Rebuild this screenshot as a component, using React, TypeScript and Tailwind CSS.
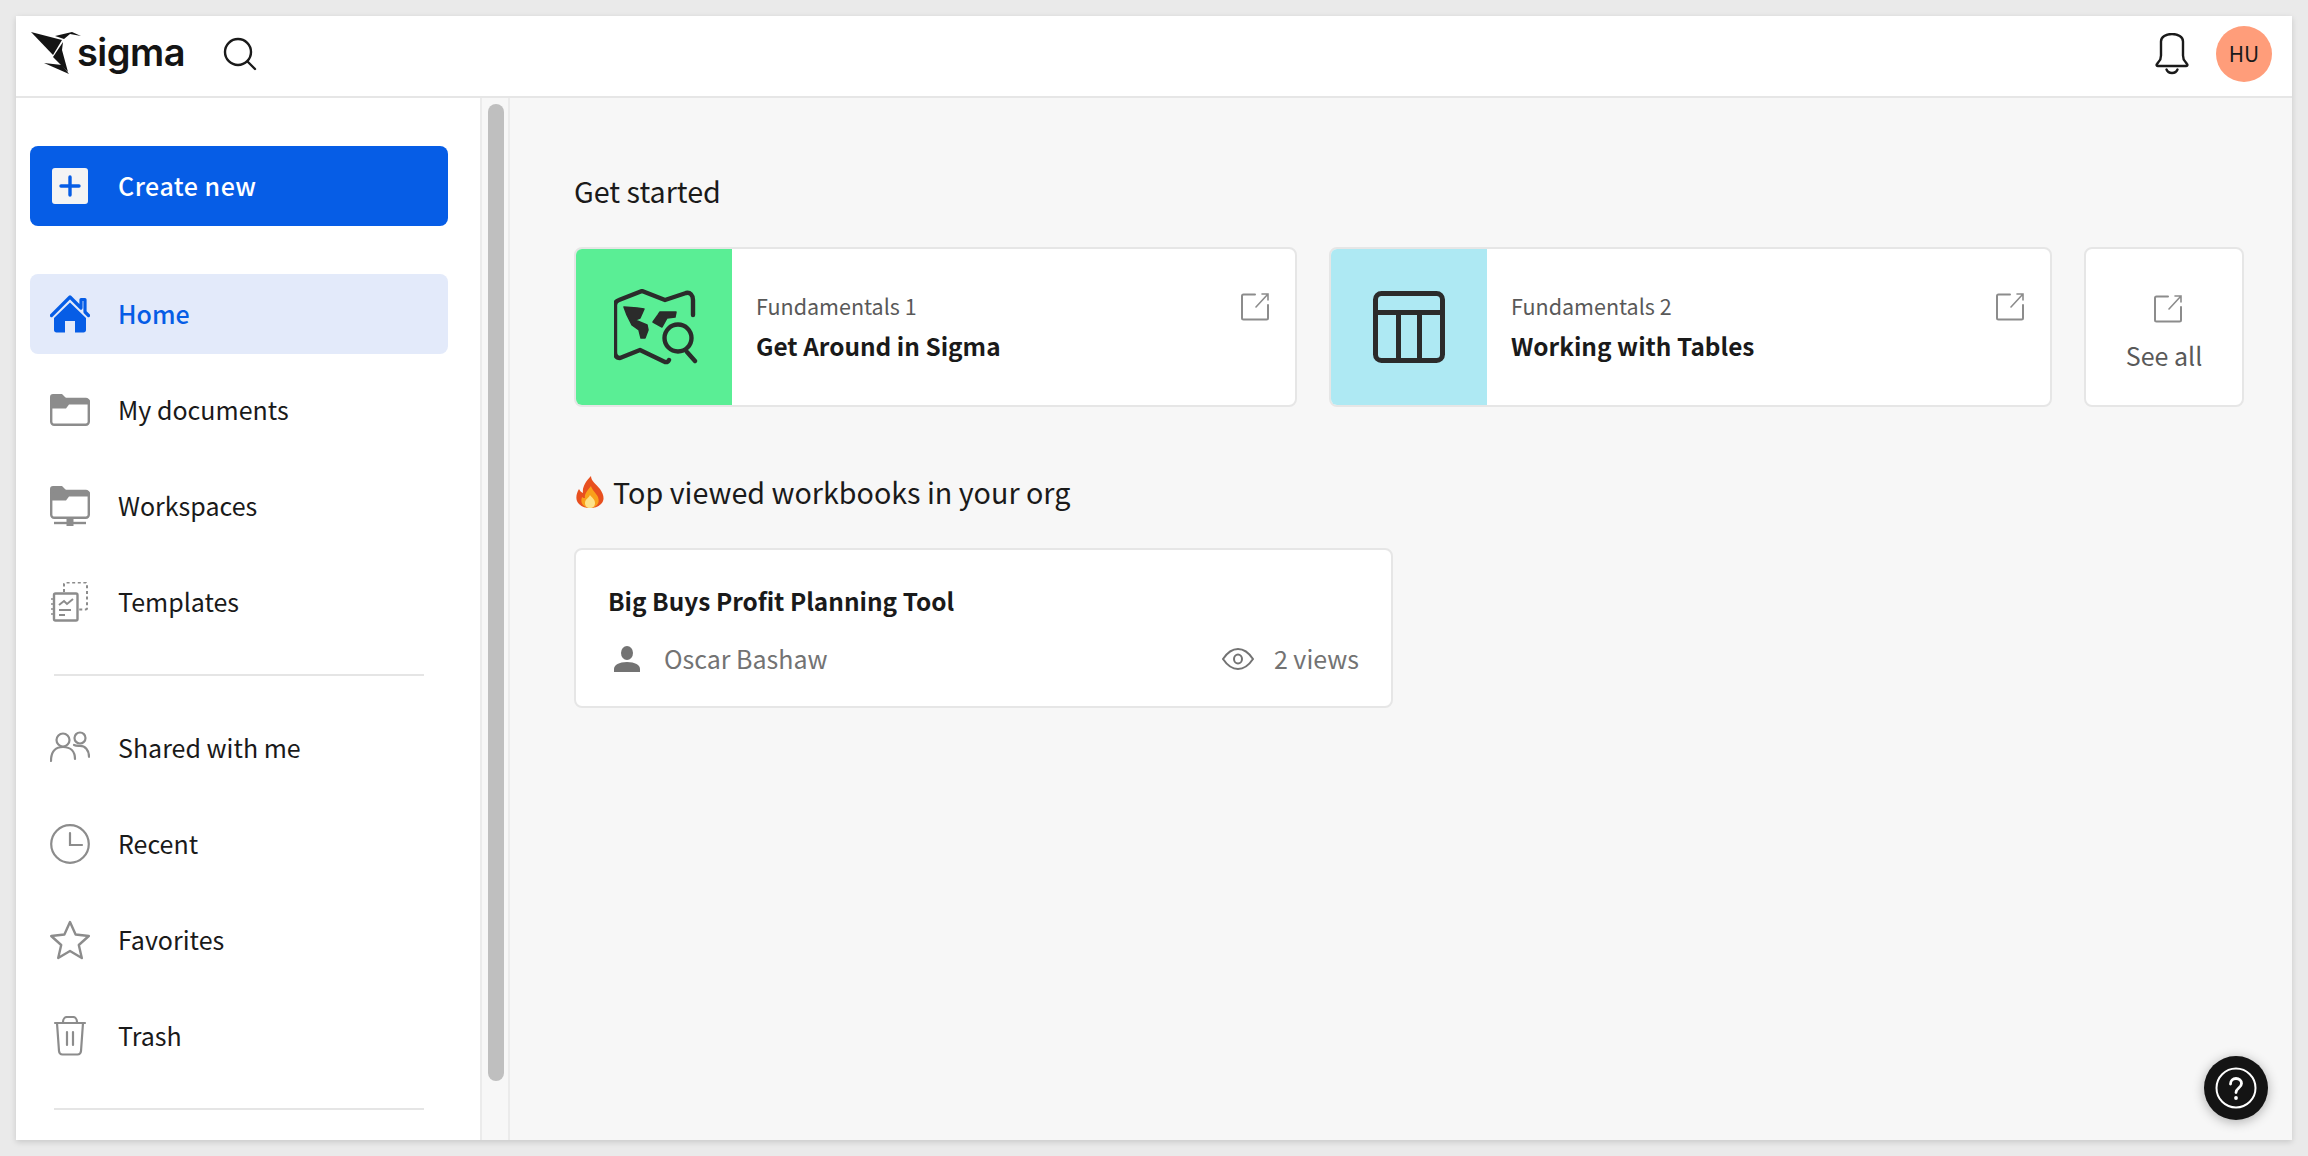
import React from "react";

const FONT = "font-['Noto_Sans_CJK_SC','Noto_Sans',sans-serif]";

const Logo = () => (
  <svg width="52" height="46" viewBox="0 0 52 46" fill="#141414" className="shrink-0">
    <polygon points="1,1 32,9 23,24" />
    <polygon points="25,5 42,1 51,5 40,3 34,8" />
    <polygon points="33,11 23,26 38,41 32,19" />
    <polygon points="14,32 32,34 39,43" />
  </svg>
);

const Search = () => (
  <svg width="34" height="34" viewBox="0 0 34 34" fill="none" stroke="#1a1a1a" strokeWidth="2.4" strokeLinecap="round">
    <circle cx="15" cy="15" r="13" />
    <path d="M24.5 24.5 32 32" />
  </svg>
);

const Bell = () => (
  <svg width="34" height="42" viewBox="0 0 34 42" fill="none" stroke="#1a1a1a" strokeWidth="2.4" strokeLinejoin="round" strokeLinecap="round">
    <path d="M6 8.500v14c0 3-1 5-2.500 6.500L2 31c-.8 1-.3 2 1 2h28c1.300 0 1.800-1 1-2l-1.500-2C29 27.500 28 25.500 28 22.500v-14C28 4 23 1 17 1S6 4 6 8.500Z" />
    <path d="M11.500 36.500c1 2.500 3 3.500 5.500 3.500s4.500-1 5.500-3.500" />
  </svg>
);

const Plus = () => (
  <div className="w-9 h-9 rounded-[3px] bg-[#f4f4f4] flex items-center justify-center shrink-0">
    <svg width="22" height="22" viewBox="0 0 22 22" stroke="#065de6" strokeWidth="3.400" strokeLinecap="round">
      <path d="M11 2v18M2 11h18" />
    </svg>
  </div>
);

const HomeIcon = () => (
  <svg width="40" height="40" viewBox="0 0 40 40" fill="#065de6">
    <path d="M20 8.500 4 24v12c0 1.500 1 2.500 2.500 2.500H15V27h10v11.500h8.500c1.500 0 2.500-1 2.500-2.500V24Z" />
    <path d="M1.500 21.500 20 3l11 11V5.500h4V18l3.500 3.500" fill="none" stroke="#065de6" strokeWidth="3.200" strokeLinecap="round" strokeLinejoin="round" />
  </svg>
);

const G = "#8c8c8c";

const Folder = () => (
  <svg width="40" height="40" viewBox="0 0 40 40" fill="none">
    <path d="M0 7c0-2 1-3 3-3h9l5 5h20c2 0 3 1 3 3v2.500H19l-3 4H0Z" fill={G} />
    <rect x="1.200" y="9" width="37.600" height="25.800" rx="3" stroke={G} strokeWidth="2.400" />
  </svg>
);

const WorkspaceIcon = () => (
  <svg width="40" height="40" viewBox="0 0 40 40" fill="none">
    <path d="M0 3c0-2 1-3 3-3h9l5 5h20c2 0 3 1 3 3v2.500H19l-3 4H0Z" fill={G} />
    <rect x="1.200" y="5" width="37.600" height="26.800" rx="3" stroke={G} strokeWidth="2.400" />
    <path d="M4 37h32" stroke={G} strokeWidth="2.400" />
    <rect x="16.500" y="33" width="7" height="7" fill={G} />
  </svg>
);

const TemplateIcon = () => (
  <svg width="40" height="40" viewBox="0 0 40 40" fill="none" stroke={G} strokeWidth="2">
    <path d="M14 10V2c0-.8.500-1.500 1.500-1.500h20c1 0 1.500.7 1.500 1.500v24c0 1-.5 1.500-1.500 1.500H28" strokeDasharray="3 2.600" />
    <rect x="4" y="11.500" width="23.500" height="27" rx="1.500" strokeWidth="2.400" />
    <path d="M1 17h3M1 22h3M1 27h3M1 32h3" strokeWidth="1.600" />
    <path d="M9 23l5-4 3 3 6-5" strokeWidth="2" />
    <path d="M9 28h12M9 33h6" strokeWidth="2" />
  </svg>
);

const People = () => (
  <svg width="40" height="40" viewBox="0 0 40 40" fill="none" stroke={G} strokeWidth="2.200" strokeLinecap="round">
    <circle cx="13" cy="12" r="6.500" />
    <path d="M1 33c0-9 4-14 12-14s12 5 12 12" />
    <circle cx="30" cy="10" r="5.500" />
    <path d="M24 17c2 1 4 .8 6 .8 5 0 9 4 9 11" />
  </svg>
);

const Clock = () => (
  <svg width="40" height="40" viewBox="0 0 40 40" fill="none" stroke={G} strokeWidth="2.200" strokeLinecap="round">
    <circle cx="20" cy="20" r="18.800" />
    <path d="M20 9v12h12" />
  </svg>
);

const Star = () => (
  <svg width="40" height="40" viewBox="0 0 40 40" fill="none" stroke={G} strokeWidth="2.400" strokeLinejoin="round">
    <path d="m20 2 5.600 12.500L38.800 16l-10 9 3 13L20 31l-11.800 7 3-13-10-9 13.200-1.500Z" />
  </svg>
);

const Trash = () => (
  <svg width="40" height="40" viewBox="0 0 40 40" fill="none" stroke={G} strokeWidth="2.200" strokeLinecap="round">
    <path d="M5 7h30" />
    <path d="M7 7l2 28c.2 2 1.500 3.500 3.500 3.500h15c2 0 3.300-1.500 3.500-3.500l2-28" />
    <path d="M13 6c0-3 2-5 4-5h6c2 0 4 2 4 5" />
    <path d="M17 16v13M23 16v13" />
  </svg>
);

const External = ({ c = "#8c8c8c" }: { c?: string }) => (
  <svg width="28" height="28" viewBox="0 0 28 28" fill="none" stroke={c} strokeWidth="2" strokeLinecap="round">
    <path d="M14 1.500H2.500c-.8 0-1.500.7-1.500 1.500v22c0 .8.700 1.500 1.500 1.500h23c.8 0 1.500-.7 1.500-1.500V12" />
    <path d="M15 14 27 1M21 1h6v6" strokeWidth="1.600" />
  </svg>
);

const MapIcon = () => (
  <svg width="84" height="76" viewBox="0 0 84 76" fill="none" stroke="#2b2b2b" strokeWidth="4.400" strokeLinecap="round" strokeLinejoin="round" className="ml-1">
    <path d="M79 26V11c0-5-3-8-7-7L51 11 28 2 5 11c-3 1-4 3-4 5v47c0 4 2 6 5 6l20-8 25 12c2 .5 3 0 4-2" />
    <path d="M10 18l13 1 7 1-4 9-5 2 12 5 1 5-3 8h-4l-2-8-7-5-5-10Z" fill="#2b2b2b" strokeWidth="1.500" />
    <path d="M46 23h16l-1 5-8 1-5 9-9-5 5-7Z" fill="#2b2b2b" strokeWidth="1.500" />
    <circle cx="64" cy="49" r="13.500" />
    <path d="M73 63l8 9" />
  </svg>
);

const TableIcon = () => (
  <svg width="72" height="72" viewBox="0 0 72 72" fill="none" stroke="#2b2b2b" strokeWidth="5">
    <rect x="2.500" y="2.500" width="67" height="67" rx="6" />
    <path d="M2.500 21.500h67M25.500 21.500v48M46.500 21.500v48" />
  </svg>
);

const Fire = () => (
  <svg width="28" height="32" viewBox="0 0 28 32" className="shrink-0 ml-0.5">
    <path d="M15 0c0 5 5 8 9 13 4 6 5 11 1 15-3 3-7 4-11 4S6 31 3 28c-4-4-3-10 0-15 1 2 2 3 4 4C6 11 10 5 15 0Z" fill="#e8501f" />
    <path d="M15 10c1 4 5 7 7 11 1 3 1 6-1 8-2 2-4 3-7 3s-5-1-7-3c-2-2-2-5-1-8 1 1 2 1 3 1-1-4 3-8 6-12Z" fill="#f9a01b" />
    <path d="M14 19c1 2 5 4 5 8 0 3-2 5-5 5s-5-2-5-5c0-4 4-5 5-8Z" fill="#fde28a" />
  </svg>
);

const Person = () => (
  <svg width="26" height="26" viewBox="0 0 26 26" fill="#737373">
    <ellipse cx="13" cy="7" rx="6" ry="7" />
    <path d="M0 26v-3c0-4 5-7 13-7s13 3 13 7v3Z" />
  </svg>
);

const Eye = () => (
  <svg width="32" height="22" viewBox="0 0 32 22" fill="none" stroke="#737373" strokeWidth="2">
    <path d="M1 11C5 5 10 1 16 1s11 4 15 10c-4 6-9 10-15 10S5 17 1 11Z" strokeLinejoin="round" />
    <ellipse cx="16" cy="11" rx="4" ry="4.500" />
  </svg>
);

const Help = () => (
  <svg width="42" height="42" viewBox="0 0 42 42" fill="none" stroke="#fff" strokeWidth="2">
    <circle cx="21" cy="21" r="19.500" />
    <path d="M15.500 17c0-3.500 2.500-5.500 5.500-5.500s5.500 2 5.500 5c0 4.500-5.500 4.500-5.500 9" strokeWidth="2.800" strokeLinecap="round" />
    <circle cx="21" cy="31" r="1.900" fill="#fff" stroke="none" />
  </svg>
);

const Row = ({ icon, label }: { icon: React.ReactNode; label: string }) => (
  <div className="h-20 flex items-center pl-5 gap-[28px] text-[#1a1a1a]">
    <div className="w-10 h-10 flex items-center justify-center shrink-0">{icon}</div>
    <span className="text-[25px] leading-10 -mt-[2px]">{label}</span>
  </div>
);

const Divider = () => <div className="h-0.5 my-8 ml-6 w-[370px] bg-[#e5e5e5] shrink-0" />;

const Tutorial = ({ color, icon, eyebrow, title }: { color: string; icon: React.ReactNode; eyebrow: string; title: string }) => (
  <div className="flex-1 h-40 flex bg-white border-2 border-[#e6e6e6] rounded-lg overflow-hidden">
    <div className={`w-[156px] shrink-0 flex items-center justify-center ${color}`}>{icon}</div>
    <div className="flex-1 pl-6 pt-[41px]">
      <div className="text-[21.5px] leading-8 text-[#595959]">{eyebrow}</div>
      <div className="text-[24.4px] leading-9 mt-[6px] font-semibold text-[#1a1a1a]">{title}</div>
    </div>
    <div className="pt-[44px] pr-[26px] h-fit">
      <External />
    </div>
  </div>
);

export default function App() {
  return (
    <div className={`${FONT} h-screen w-full bg-[#eaeaea] p-4 overflow-hidden`}>
      <div className="relative h-full flex flex-col bg-white shadow-[0_2px_6px_rgba(0,0,0,0.15)] overflow-hidden">
        <header className="h-[82px] shrink-0 border-b-2 border-[#e6e6e6] flex items-center pl-[14px] pr-5 pb-1 bg-white">
          <Logo />
          <span className="font-['Inter',sans-serif] text-[38px] font-semibold tracking-[-0.5px] text-[#141414] -ml-[5px] leading-none -mt-1">sigma</span>
          <div className="ml-[38px]">
            <Search />
          </div>
          <div className="ml-auto flex items-center gap-[27px]">
            <Bell />
            <div className="w-14 h-14 rounded-full bg-[#ff9d7a] flex items-center justify-center text-[21px] text-[#1a1a1a]">HU</div>
          </div>
        </header>
        <div className="flex-1 flex min-h-0">
          <aside className="w-[466px] shrink-0 border-r-2 border-[#ebebeb] pt-12 pl-[14px] pr-[32px] overflow-hidden flex flex-col">
            <div className="h-20 shrink-0 rounded-lg bg-[#065de6] flex items-center pl-[22px] gap-[30px] text-white">
              <Plus />
              <span className="text-[25px] font-medium tracking-[0.5px] -mt-[1px]">Create new</span>
            </div>
            <div className="h-20 shrink-0 mt-12 rounded-lg bg-[#e3eafa] flex items-center pl-5 gap-[28px] text-[#065de6]">
              <HomeIcon />
              <span className="text-[25px] font-medium -mt-[1px]">Home</span>
            </div>
            <div className="flex flex-col gap-4 mt-4">
              <Row icon={<Folder />} label="My documents" />
              <Row icon={<WorkspaceIcon />} label="Workspaces" />
              <Row icon={<TemplateIcon />} label="Templates" />
            </div>
            <Divider />
            <div className="flex flex-col gap-4">
              <Row icon={<People />} label="Shared with me" />
              <Row icon={<Clock />} label="Recent" />
              <Row icon={<Star />} label="Favorites" />
              <Row icon={<Trash />} label="Trash" />
            </div>
            <Divider />
          </aside>
          <div className="w-[28px] shrink-0 border-r-2 border-[#ebebeb] bg-[#f7f7f7] pl-[6px] pt-[6px]">
            <div className="w-4 h-[977px] rounded-lg bg-[#bfbfbf]" />
          </div>
          <main className="flex-1 min-w-0 bg-[#f7f7f7] pl-16 pr-12 pt-[73px]">
            <h2 className="text-[28.7px] leading-10 font-normal text-[#1a1a1a]">Get started</h2>
            <div className="flex gap-8 mt-9">
              <Tutorial color="bg-[#5aee95]" icon={<MapIcon />} eyebrow="Fundamentals 1" title="Get Around in Sigma" />
              <Tutorial color="bg-[#aee9f3]" icon={<TableIcon />} eyebrow="Fundamentals 2" title="Working with Tables" />
              <div className="w-40 h-40 shrink-0 bg-white border-2 border-[#e6e6e6] rounded-lg flex flex-col items-center pt-[46px]">
                <div className="pl-2">
                  <External />
                </div>
                <span className="text-[25px] leading-9 mt-[14px] text-[#595959]">See all</span>
              </div>
            </div>
            <h2 className="mt-[65px] text-[28.7px] leading-10 font-normal text-[#1a1a1a] flex items-center gap-[9px]">
              <Fire />
              Top viewed workbooks in your org
            </h2>
            <div className="mt-9 w-[819px] h-40 bg-white border-2 border-[#e6e6e6] rounded-lg px-8 pt-[33px]">
              <div className="text-[24.4px] leading-9 font-semibold text-[#1a1a1a]">Big Buys Profit Planning Tool</div>
              <div className="flex items-center mt-[22px] text-[25px] leading-9 text-[#737373]">
                <div className="pl-1.5">
                  <Person />
                </div>
                <span className="ml-[24px] -mt-[1px]">Oscar Bashaw</span>
                <div className="ml-auto">
                  <Eye />
                </div>
                <span className="ml-[20px] -mt-[1px]">2 views</span>
              </div>
            </div>
          </main>
        </div>
        <div className="absolute right-6 bottom-5 w-16 h-16 rounded-full bg-[#141414] flex items-center justify-center shadow-[0_2px_12px_rgba(0,0,0,0.3)]">
          <Help />
        </div>
      </div>
    </div>
  );
}
